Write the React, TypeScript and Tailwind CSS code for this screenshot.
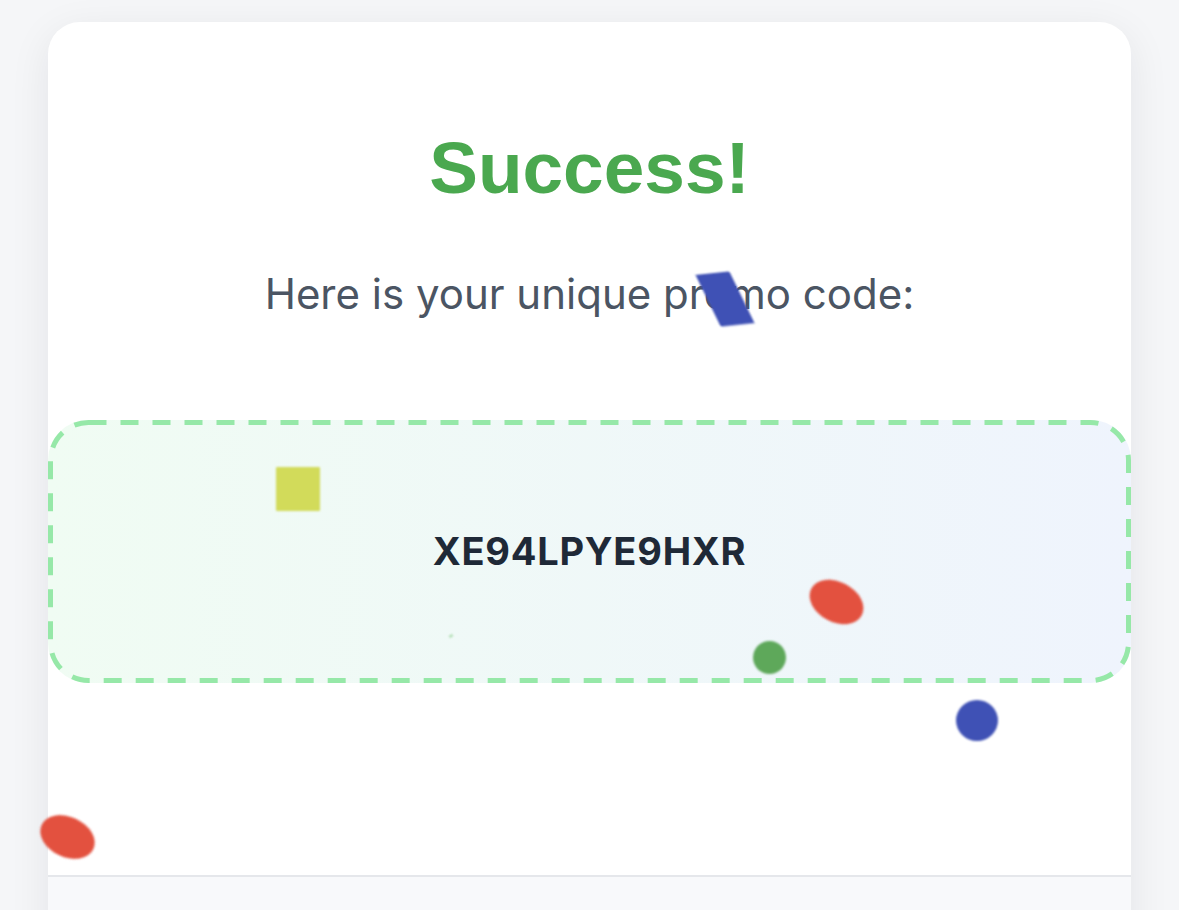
import React from 'react'

type Piece = {
  left: number
  top: number
  w: number
  h: number
  color: string
  rotate: number
  skew?: number
  round?: boolean
}

// confetti scattered over the card
const pieces: Piece[] = [
  { left: 708, top: 272, w: 34, h: 54, color: '#3f51b5', rotate: -6, skew: 20 },
  { left: 276, top: 467, w: 44, h: 44, color: '#d2db5a', rotate: 0 },
  { left: 808, top: 582, w: 57, h: 40, color: '#e3513f', rotate: 28, round: true },
  { left: 753, top: 641, w: 33, h: 33, color: '#5ea85a', rotate: 0, round: true },
  { left: 956, top: 700, w: 42, h: 41, color: '#3f51b5', rotate: 0, round: true },
  { left: 39, top: 817, w: 57, h: 40, color: '#e3513f', rotate: 25, round: true },
  { left: 449, top: 635, w: 4, h: 2, color: '#9bd49b', rotate: -30 },
]

function Confetti() {
  return (
    <div className="pointer-events-none absolute inset-0">
      {pieces.map((p, i) => (
        <div
          key={i}
          className={`absolute blur-[0.8px] ${p.round ? 'rounded-[50%]' : 'rounded-[1px]'}`}
          style={{
            left: p.left,
            top: p.top,
            width: p.w,
            height: p.h,
            background: p.color,
            transform: `rotate(${p.rotate}deg) skewX(${p.skew ?? 0}deg)`,
          }}
        />
      ))}
    </div>
  )
}

// long dashes, like the reference's dashed outline
function DashedOutline() {
  return (
    <svg className="pointer-events-none absolute inset-0 h-full w-full">
      <rect
        x="2.5"
        y="2.5"
        width="calc(100% - 5px)"
        height="calc(100% - 5px)"
        rx="38"
        fill="none"
        stroke="#96e8a8"
        strokeWidth="5"
        strokeDasharray="18 14"
      />
    </svg>
  )
}

export default function App() {
  return (
    <div className="relative min-h-[910px] overflow-hidden bg-[#f5f6f8] px-12 pt-[22px] font-['Inter',sans-serif]">
      <div className="overflow-hidden rounded-t-[32px] bg-white shadow-[0_10px_40px_rgba(15,23,42,0.08)]">
        <div className="pt-[109px] text-center">
          <h1 className="font-['Liberation_Sans',Arial,sans-serif] text-[73px] font-bold leading-none text-[#4aa84f]">
            Success!
          </h1>
          <p className="mt-[62px] text-[42px] leading-[56px] text-[#4b5563]">
            Here is your unique promo code:
          </p>
        </div>

        <div className="relative mt-[98px] flex h-[263px] items-center justify-center rounded-[40px] bg-gradient-to-r from-[#f0fcf3] to-[#eff4fd]">
          <DashedOutline />
          <span className="text-[38px] font-bold tracking-[0.02em] text-[#1f2937]">
            XE94LPYE9HXR
          </span>
        </div>

        <div className="h-[192px]" />
        <div className="h-[120px] border-t-2 border-[#e5e7eb] bg-[#f8f9fb]" />
      </div>
      <Confetti />
    </div>
  )
}
